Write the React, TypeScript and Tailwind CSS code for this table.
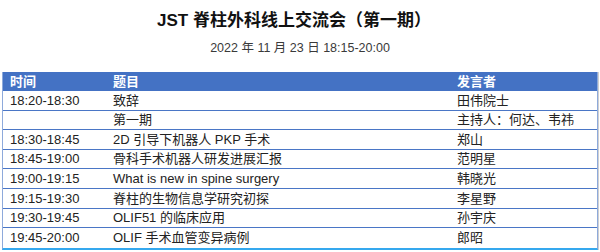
import React from "react";

const rows: [string, string, string, number][] = [
  ["18:20-18:30", "致辞", "田伟院士", 20],
  ["", "第一期", "主持人：何达、韦祎", 19],
  ["18:30-18:45", "2D 引导下机器人 PKP 手术", "郑山", 20],
  ["18:45-19:00", "骨科手术机器人研发进展汇报", "范明星", 19],
  ["19:00-19:15", "What is new in spine surgery", "韩晓光", 20],
  ["19:15-19:30", "脊柱的生物信息学研究初探", "李星野", 20],
  ["19:30-19:45", "OLIF51 的临床应用", "孙宇庆", 19],
  ["19:45-20:00", "OLIF 手术血管变异病例", "郎昭", 20],
];

export default function App() {
  const font = { fontFamily: '"Liberation Sans", "Noto Sans CJK SC", sans-serif' };
  return (
    <div className="w-[600px] h-[252px] bg-white overflow-hidden" style={font}>
      <div className="h-[37px] flex items-end justify-center pb-[8px]">
        <div className="text-[17px] font-bold text-[#111] leading-none pl-[-6px] mr-[12px]">
          JST 脊柱外科线上交流会（第一期）
        </div>
      </div>
      <div className="h-[35px] flex justify-center pt-[2px]">
        <div className="text-[12.5px] text-[#3a3a3a] leading-[18px]">
          2022 年 11 月 23 日 18:15-20:00
        </div>
      </div>
      <div className="ml-[2px] w-[596px] border-l border-r border-[#8eaadb] border-b-2 border-b-[#35a8ee] shadow-[1px_0_0_#d0d0d0]">
        <div className="h-[19px] flex items-center bg-[#4472c4] text-white font-bold text-[13px]">
          <div className="w-[103px] pl-[7px]">时间</div>
          <div className="w-[344px] pl-[7px]">题目</div>
          <div className="flex-1 pl-[7px]">发言者</div>
        </div>
        {rows.map(([t, title, sp, h], i) => (
          <div
            key={i}
            className={`flex items-center text-[13px] text-[#222] ${i < rows.length - 1 ? "border-b border-[#4a76c6]" : ""}`}
            style={{ height: h }}
          >
            <div className="w-[103px] pl-[7px] whitespace-nowrap">{t}</div>
            <div className="w-[344px] pl-[7px] whitespace-nowrap">{title}</div>
            <div className="flex-1 pl-[7px] whitespace-nowrap">{sp}</div>
          </div>
        ))}
      </div>
    </div>
  );
}
